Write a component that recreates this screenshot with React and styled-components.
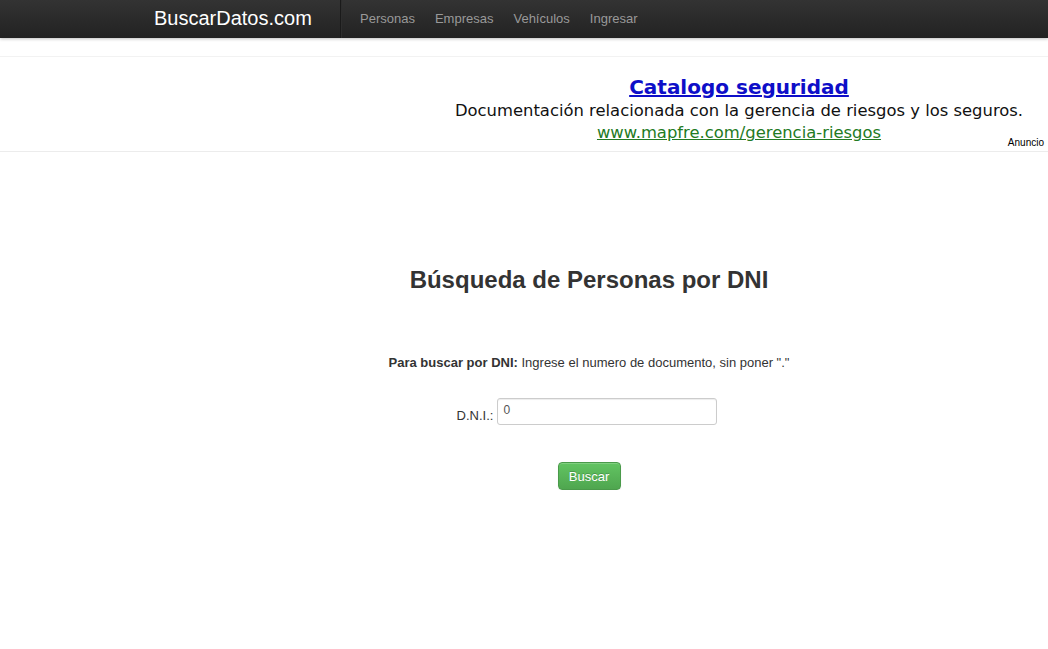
import React from 'react';
import styled, { createGlobalStyle } from 'styled-components';

const GlobalStyle = createGlobalStyle`
  html, body {
    margin: 0;
    padding: 0;
    background: #fff;
    overflow-x: hidden;
  }
  body {
    font-family: "Liberation Sans", Arial, sans-serif;
    font-size: 13px;
    color: #333;
  }
`;

const Navbar = styled.div`
  height: 38px;
  background: linear-gradient(to bottom, #333 0%, #222 100%);
  box-shadow: 0 1px 3px rgba(0, 0, 0, 0.25);
`;

const NavInner = styled.div`
  display: flex;
  align-items: stretch;
  height: 100%;
  margin-left: 154px;
`;

const Brand = styled.a`
  display: flex;
  align-items: center;
  padding-bottom: 2px;
  width: 186px;
  color: #fff;
  font-size: 20px;
  text-decoration: none;
`;

const Divider = styled.div`
  width: 1px;
  background: #1a1a1a;
  border-right: 1px solid #2e2e2e;
`;

const NavList = styled.ul`
  display: flex;
  margin: 0;
  padding: 0 0 0 18px;
  list-style: none;
  gap: 20px;
`;

const NavItem = styled.li`
  display: flex;
  align-items: center;
  padding-bottom: 1px;
  color: #999;
  font-size: 13px;
`;

const AdRow = styled.div`
  margin-top: 18px;
  height: 96px;
  border-top: 1px solid #f2f2f2;
  border-bottom: 1px solid #ececec;
  box-sizing: border-box;
  overflow: hidden;
`;

const AdFrame = styled.div`
  position: relative;
  width: 618px;
  height: 94px;
  margin-left: 430px;
  text-align: center;
  font-family: "DejaVu Sans", Verdana, sans-serif;
`;

const AdTitle = styled.a`
  display: block;
  padding-top: 17px;
  color: #0e0ec8;
  font-size: 20px;
  font-weight: bold;
  line-height: 26px;
  text-decoration: underline;
`;

const AdText = styled.div`
  color: #111;
  font-size: 16.4px;
  line-height: 22px;
`;

const AdUrl = styled.a`
  display: block;
  color: #237a23;
  font-size: 16.4px;
  line-height: 22px;
  text-decoration: underline;
`;

const AdLabel = styled.span`
  position: absolute;
  right: 4px;
  top: 80px;
  font-family: "Liberation Sans", Arial, sans-serif;
  font-size: 10px;
  color: #000;
`;

const Main = styled.div`
  width: 870px;
  margin-left: 154px;
  text-align: center;
`;

const Title = styled.h1`
  margin: 113px 0 0;
  font-size: 24px;
  line-height: 30px;
  font-weight: bold;
  color: #333;
`;

const Hint = styled.p`
  margin: 59px 0 0;
  font-size: 13px;
  line-height: 18px;
  color: #333;
  b {
    font-weight: bold;
  }
`;

const FieldRow = styled.div`
  display: flex;
  justify-content: center;
  align-items: flex-end;
  gap: 4px;
  margin-top: 26px;
  padding-right: 4px;
`;

const Label = styled.label`
  font-size: 13px;
  color: #333;
  padding-bottom: 2px;
`;

const Input = styled.input`
  width: 220px;
  height: 27px;
  box-sizing: border-box;
  padding: 0 5px 4px;
  border: 1px solid #ccc;
  border-radius: 3px;
  font-family: "Liberation Sans", Arial, sans-serif;
  font-size: 12px;
  color: #555;
  box-shadow: inset 0 1px 1px rgba(0, 0, 0, 0.075);
`;

const Button = styled.button`
  display: block;
  margin: 37px auto 0;
  width: 63px;
  height: 28px;
  padding: 0;
  border: 1px solid #4a9a4a;
  border-radius: 4px;
  background: linear-gradient(to bottom, #62c462 0%, #4fa64f 100%);
  color: #fff;
  font-family: "Liberation Sans", Arial, sans-serif;
  font-size: 13px;
  text-shadow: 0 -1px 0 rgba(0, 0, 0, 0.2);
  box-shadow: inset 0 1px 0 rgba(255, 255, 255, 0.2), 0 1px 2px rgba(0, 0, 0, 0.05);
  cursor: pointer;
`;

export default function App() {
  return (
    <>
      <GlobalStyle />
      <Navbar>
        <NavInner>
          <Brand href="#">BuscarDatos.com</Brand>
          <Divider />
          <NavList>
            <NavItem>Personas</NavItem>
            <NavItem>Empresas</NavItem>
            <NavItem>Vehículos</NavItem>
            <NavItem>Ingresar</NavItem>
          </NavList>
        </NavInner>
      </Navbar>

      <AdRow>
        <AdFrame>
          <AdTitle href="#">Catalogo seguridad</AdTitle>
          <AdText>Documentación relacionada con la gerencia de riesgos y los seguros.</AdText>
          <AdUrl href="#">www.mapfre.com/gerencia-riesgos</AdUrl>
          <AdLabel>Anuncio</AdLabel>
        </AdFrame>
      </AdRow>

      <Main>
        <Title>Búsqueda de Personas por DNI</Title>
        <Hint>
          <b>Para buscar por DNI:</b> Ingrese el numero de documento, sin poner "."
        </Hint>
        <FieldRow>
          <Label>D.N.I.:</Label>
          <Input defaultValue="0" />
        </FieldRow>
        <Button>Buscar</Button>
      </Main>
    </>
  );
}
